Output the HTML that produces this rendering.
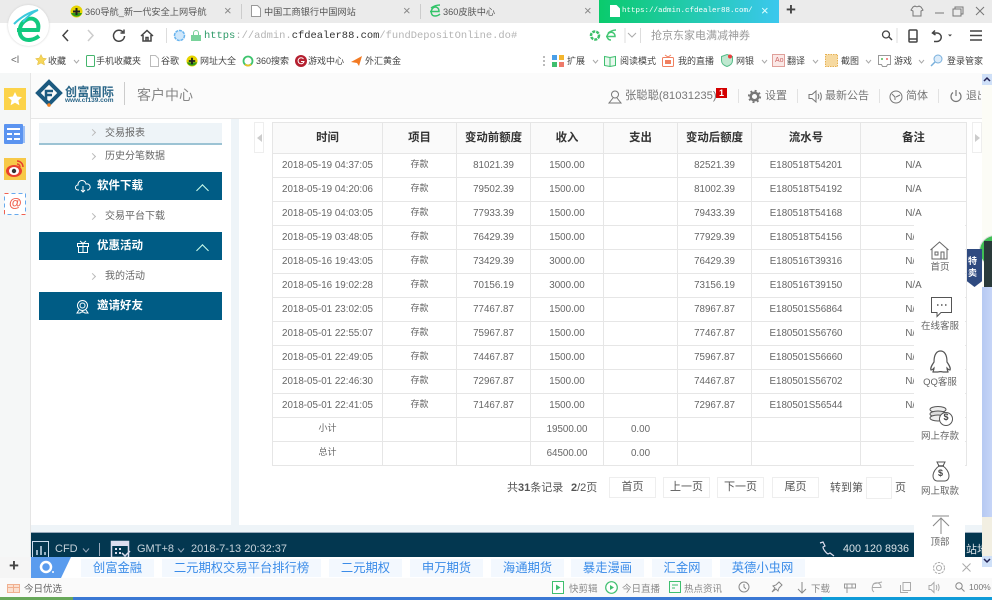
<!DOCTYPE html>
<html><head><meta charset="utf-8">
<style>
html,body{margin:0;padding:0}
body{width:992px;height:600px;overflow:hidden;position:relative;background:#fff;font-family:"Liberation Sans","Noto Sans CJK SC",sans-serif;font-size:10px;color:#555}
.a{position:absolute;white-space:nowrap}
svg{position:absolute;overflow:visible}
table{position:absolute;left:272px;top:122px;width:694px;border-collapse:collapse;table-layout:fixed}
tr{height:24px}
td,th{border:1px solid #e6e6e6;height:24px;box-sizing:border-box;line-height:12px;padding:2px 0 0;text-align:center;font-size:9.8px;color:#666;font-weight:normal;overflow:hidden;white-space:nowrap}
tr.h{height:30.5px}
th{height:30.5px;padding:0;background:#fafafa;color:#333;font-weight:bold;font-size:11.400px}
td.c{font-size:9px;padding:0 0 3px}
.nav{position:absolute;left:39px;width:183px;height:28px;background:#005c85;color:#fff;font-weight:bold;font-size:11.500px}
.nav span{position:absolute;left:58px;top:4.500px}
.sub{position:absolute;font-size:10px;color:#666;white-space:nowrap}
.chev{position:absolute;width:4px;height:4px;border-top:1px solid #bbb;border-right:1px solid #bbb;transform:rotate(45deg);left:90px}
.up{position:absolute;left:198px;width:8px;height:8px;border-top:1px solid #cfe;border-left:1px solid #cfe;transform:rotate(45deg)}
.btn{position:absolute;top:477px;height:21px;border:1px solid #eee;box-sizing:border-box;text-align:center;line-height:19px;font-size:11px;color:#555}
.lnk{position:absolute;top:559px;height:18px;background:#f3f8fe;color:#3b8ce8;font-size:12.300px;line-height:18px;text-align:center;white-space:nowrap}
.fl{position:absolute;left:915px;width:50px;text-align:center;font-size:9.500px;color:#666;white-space:nowrap}
.t1{font-size:9.200px;color:#555}
.t2{font-size:9px;color:#444}
</style></head><body>

<!-- tab bar -->
<div class="a" style="left:0;top:0;width:992px;height:23px;background:#ebebeb"></div>
<svg style="left:70px;top:5px" width="13" height="13" viewBox="0 0 13 13"><circle cx="6.500" cy="6.500" r="6" fill="#e6d400"/><path d="M1 8a6 6 0 0 0 11 0z" fill="#2f9a18"/><path d="M6.500 3v7M3 6.500h7" stroke="#222" stroke-width="2"/></svg>
<div class="a t1" style="left:85px;top:4px">360导航_新一代安全上网导航</div>
<div class="a" style="left:224px;top:3px;font-size:13px;color:#888">×</div>
<div class="a" style="left:241px;top:4px;width:1px;height:15px;background:#ccc"></div>
<svg style="left:251px;top:5px" width="10" height="12" viewBox="0 0 10 12"><path d="M.5.500h6l3 3v8h-9z" fill="#fff" stroke="#999"/></svg>
<div class="a t1" style="left:264px;top:4px">中国工商银行中国网站</div>
<div class="a" style="left:403px;top:3px;font-size:13px;color:#888">×</div>
<div class="a" style="left:420px;top:4px;width:1px;height:15px;background:#ccc"></div>
<svg style="left:429px;top:4px" width="12" height="14" viewBox="0 0 12 14"><path d="M1 7.500h9C10 3 6 2 4 4 1 7 2 12 6 12c2 0 4-1 5-2M2 4c3-2 6-3 9-3" fill="none" stroke="#35c46a" stroke-width="1.500"/></svg>
<div class="a t1" style="left:443px;top:4px">360皮肤中心</div>
<div class="a" style="left:584px;top:3px;font-size:13px;color:#888">×</div>
<div class="a" style="left:599px;top:0;width:180px;height:23px;background:linear-gradient(90deg,#0acb6c,#3bc8ee)"></div>
<svg style="left:610px;top:5px" width="10" height="12" viewBox="0 0 10 12"><path d="M0 0h6.500l3.500 3.500V12H0z" fill="#fff"/></svg>
<div class="a" style="left:622px;top:7px;font-family:'Liberation Mono',monospace;font-size:7.500px;color:#fff">https://admin.cfdealer88.com/</div>
<div class="a" style="left:761px;top:3px;font-size:13px;color:#dff">×</div>
<div class="a" style="left:786px;top:0;font-size:17px;color:#444;font-weight:bold">+</div>
<svg style="left:910px;top:5px" width="80" height="13" viewBox="0 0 80 13" fill="none" stroke="#777"><path d="M3 2l2-1c1 1 3 1 4 0l2 1 2 3-2 1v5H3V6L1 5z"/><path d="M25 8h9"/><path d="M43 4h8v7h-8zM45 4V2h8v7h-2"/><path d="M66 2l8 8M74 2l-8 8"/></svg>

<!-- address bar -->
<div class="a" style="left:0;top:23px;width:992px;height:27px;background:#fff;border-bottom:1px solid #e4e4e4"></div>
<svg style="left:60px;top:28px" width="100" height="16" viewBox="0 0 100 16" fill="none" stroke="#444" stroke-width="1.500"><path d="M8 2L3 7.500 8 13"/><path d="M28 2l5 5.500L28 13" stroke="#ccc"/><path d="M63 4a5.500 5.500 0 1 0 1.500 4M64 1.500V5h-3.500"/><path d="M81 8l6-5.500L93 8M83 7v6h8V7M86 13V9.500h2V13"/></svg>
<div class="a" style="left:166px;top:28px;width:1px;height:15px;background:#ddd"></div>
<svg style="left:173px;top:29px" width="13" height="13" viewBox="0 0 13 13"><circle cx="6.500" cy="6.500" r="5" fill="#cfe7fb" stroke="#66b3ee" stroke-width="1.500" stroke-dasharray="3 .8"/></svg>
<svg style="left:191px;top:30px" width="10" height="11" viewBox="0 0 10 11"><path d="M2.500 5V3a2.500 2.500 0 0 1 5 0v2" fill="none" stroke="#7ccf9a"/><rect y="5" width="10" height="6" fill="#79d39b"/></svg>
<div class="a" style="left:204px;top:30px;font-family:'Liberation Mono',monospace;font-size:10.450px;color:#b4b4b4"><span style="color:#2e9a68">https</span>://admin.<span style="color:#333">cfdealer88.com</span>/fundDepositOnline.do#</div>
<svg style="left:589px;top:28px" width="48" height="15" viewBox="0 0 48 15" fill="none"><circle cx="6" cy="7.500" r="4" stroke="#3cbf6a" stroke-width="2.500" stroke-dasharray="3 1"/><path d="M17 8.500h9C26 4 21 3 19 6c-2 3 0 6 3 6M19 5c3-2 5-3 8-3" stroke="#44c774" stroke-width="1.500"/><path d="M36 0v15" stroke="#ddd"/><path d="M39 5l4 4 4-4" stroke="#aaa"/></svg>
<div class="a" style="left:640px;top:28px;width:1px;height:15px;background:#ddd"></div>
<div class="a" style="left:651px;top:27px;font-size:11px;color:#999">抢京东家电满减神券</div>
<svg style="left:880px;top:28px" width="110" height="16" viewBox="0 0 110 16" fill="none" stroke="#444"><circle cx="6" cy="6.500" r="3.500" stroke-width="1.300"/><path d="M9 9l3 3" stroke-width="1.500"/><path d="M17 0v15" stroke="#ddd"/><rect x="29" y="2" width="8" height="12" rx="1" stroke-width="1.500"/><path d="M29 11h8" stroke-width="1.500"/><path d="M55 2.500L52.500 5l3 2M53 5h4a4 4 0 0 1 0 8.500h-3" stroke-width="1.500"/><path d="M68 6.500h4l-2 2z" fill="#444" stroke="none"/><path d="M90 3h12M90 7.500h12M90 12h12" stroke-width="1.600"/></svg>

<!-- logo circle -->
<div class="a" style="left:8px;top:5px;width:41px;height:41px;border-radius:50%;background:#fff;box-shadow:0 0 2px #ccc"></div>
<svg style="left:14px;top:9px" width="30" height="33" viewBox="0 0 30 33" fill="none"><path d="M3 21h21C26 12 19 7 12 11 5 15 3 26 10 30c4 2 10 1 15-3" stroke="#12c97f" stroke-width="4"/><path d="M0 15C7 8 16 3 24 1 17 4 12 9 9 13" stroke="#3ac9dc" stroke-width="2"/></svg>

<!-- bookmark bar -->
<div class="a" style="left:0;top:50px;width:992px;height:23px;background:#fff;border-bottom:1px solid #e2e2e2"></div>
<div class="a" style="left:11px;top:55px;font-size:10px;color:#666">&lt;l</div>
<svg style="left:35px;top:54px" width="12" height="12" viewBox="0 0 12 12"><path d="M6 .500l1.700 3.600 3.800.5-2.800 2.600.8 3.800L6 9l-3.500 1.900.8-3.800L.500 4.600l3.800-.5z" fill="#f6d65a" stroke="#e0b93a" stroke-width=".5"/></svg>
<div class="a t2" style="left:48px;top:54px">收藏</div>
<svg style="left:73px;top:60px" width="7" height="4" fill="none" stroke="#aaa"><path d="M1 0l2.500 3L6 0"/></svg>
<svg style="left:86px;top:55px" width="9" height="12" viewBox="0 0 9 12"><rect x=".5" y=".5" width="8" height="11" rx="1" fill="none" stroke="#45b56d"/></svg>
<div class="a t2" style="left:96px;top:54px">手机收藏夹</div>
<svg style="left:150px;top:55px" width="9" height="12" viewBox="0 0 9 12"><path d="M.5.500h5l3 3v8h-8z" fill="#fff" stroke="#bbb"/></svg>
<div class="a t2" style="left:161px;top:54px">谷歌</div>
<svg style="left:186px;top:55px" width="12" height="12" viewBox="0 0 13 13"><circle cx="6.500" cy="6.500" r="6" fill="#e6d400"/><path d="M1 8a6 6 0 0 0 11 0z" fill="#2f9a18"/><path d="M6.500 3v7M3 6.500h7" stroke="#222" stroke-width="2"/></svg>
<div class="a t2" style="left:200px;top:54px">网址大全</div>
<svg style="left:242px;top:55px" width="12" height="12" viewBox="0 0 12 12" fill="none"><circle cx="6" cy="6" r="4.500" stroke="#3ec46e" stroke-width="1.800"/><path d="M9 9.500a4.500 4.500 0 0 1-6 0" stroke="#f0c020" stroke-width="1.800"/></svg>
<div class="a t2" style="left:256px;top:54px">360搜索</div>
<svg style="left:295px;top:55px" width="12" height="12" viewBox="0 0 12 12"><circle cx="6" cy="6" r="6" fill="#b52030"/><path d="M8.500 4a3 3 0 1 0 .5 2.500H6" fill="none" stroke="#fff"/></svg>
<div class="a t2" style="left:308px;top:54px">游戏中心</div>
<svg style="left:351px;top:55px" width="12" height="12" viewBox="0 0 12 12"><path d="M0 7l11-6-3 10-2-3z" fill="#f27a23"/></svg>
<div class="a t2" style="left:365px;top:54px">外汇黄金</div>
<div class="a" style="left:543px;top:56px;width:2px;height:10px;border-left:2px dotted #bbb"></div>
<svg style="left:552px;top:55px" width="12" height="12" viewBox="0 0 12 12"><rect width="5" height="5" fill="#4a9fe8"/><rect x="7" y="0" width="5" height="5" fill="#f3b52e"/><rect y="7" width="5" height="5" fill="#3fbf6f"/><rect x="7" y="7" width="5" height="5" fill="#ee7a6a"/></svg>
<div class="a t2" style="left:567px;top:54px">扩展</div>
<svg style="left:592px;top:60px" width="7" height="4" fill="none" stroke="#aaa"><path d="M1 0l2.500 3L6 0"/></svg>
<svg style="left:604px;top:55px" width="12" height="12" viewBox="0 0 12 12"><path d="M.5 1.500l5.500 1 5.500-1v9L6 11.500l-5.500-1zM6 2.500v9" fill="#e8f8ee" stroke="#3fbf6f"/></svg>
<div class="a t2" style="left:620px;top:54px">阅读模式</div>
<svg style="left:662px;top:55px" width="12" height="12" viewBox="0 0 12 12"><rect x=".5" y="2.500" width="11" height="9" rx="1" fill="#fff" stroke="#f08060"/><rect x="3" y="5" width="6" height="4" fill="#f08060"/><path d="M3 0l3 2 3-2" fill="none" stroke="#f08060"/></svg>
<div class="a t2" style="left:678px;top:54px">我的直播</div>
<svg style="left:721px;top:54px" width="12" height="13" viewBox="0 0 12 13"><path d="M6 .5l5.500 2v4c0 3-2.500 5-5.500 6-3-1-5.500-3-5.500-6v-4z" fill="#bfe8d0" stroke="#55bb88"/><circle cx="9" cy="2.500" r="2" fill="#e84040"/></svg>
<div class="a t2" style="left:736px;top:54px">网银</div>
<svg style="left:761px;top:60px" width="7" height="4" fill="none" stroke="#aaa"><path d="M1 0l2.500 3L6 0"/></svg>
<svg style="left:772px;top:54px" width="13" height="13" viewBox="0 0 13 13"><rect x=".5" y=".5" width="12" height="12" fill="#fbe8e6" stroke="#e0a09a"/></svg>
<div class="a" style="left:775px;top:57px;font-size:7px;color:#c66">Ao</div>
<div class="a t2" style="left:787px;top:54px">翻译</div>
<svg style="left:812px;top:60px" width="7" height="4" fill="none" stroke="#aaa"><path d="M1 0l2.500 3L6 0"/></svg>
<svg style="left:825px;top:54px" width="13" height="13" viewBox="0 0 13 13"><rect x=".5" y=".5" width="12" height="12" fill="#f6d9a0" stroke="#e6b050" stroke-dasharray="1.500 1"/></svg>
<div class="a t2" style="left:841px;top:54px">截图</div>
<svg style="left:865px;top:60px" width="7" height="4" fill="none" stroke="#aaa"><path d="M1 0l2.500 3L6 0"/></svg>
<svg style="left:878px;top:55px" width="13" height="12" viewBox="0 0 13 12"><path d="M.5.500h12v9h-3l-1 2h-4l-1-2h-3z" fill="#fff" stroke="#999"/><circle cx="9" cy="4" r="1" fill="#e66"/><circle cx="4" cy="4" r="1" fill="#5b5"/></svg>
<div class="a t2" style="left:894px;top:54px">游戏</div>
<svg style="left:918px;top:60px" width="7" height="4" fill="none" stroke="#aaa"><path d="M1 0l2.500 3L6 0"/></svg>
<svg style="left:930px;top:54px" width="13" height="13" viewBox="0 0 13 13" fill="none"><circle cx="8" cy="5" r="4" fill="#dcecfa" stroke="#7ab0dc"/><path d="M5 8l-4 4" stroke="#7ab0dc" stroke-width="1.500"/></svg>
<div class="a t2" style="left:947px;top:54px">登录管家</div>

<!-- left browser sidebar -->
<div class="a" style="left:0;top:73px;width:30px;height:484px;background:#f5f7f7;border-right:1px solid #e5e5e5"></div>
<svg style="left:4px;top:88px" width="22" height="22" viewBox="0 0 22 22"><rect width="22" height="22" fill="#fcd34a"/><path d="M11 4l2.100 4.500 4.900.6-3.600 3.300 1 4.800L11 14.800l-4.400 2.400 1-4.800L4 9.100l4.900-.6z" fill="#fff"/></svg>
<svg style="left:4px;top:124px" width="21" height="20" viewBox="0 0 21 20"><rect width="19" height="20" rx="1" fill="#5b94f0"/><rect x="19" y="2" width="2" height="17" fill="#9cc0f6"/><path d="M3 5h13M3 10h5M10 10h6M3 15h5M10 15h6" stroke="#fff" stroke-width="2"/></svg>
<svg style="left:4px;top:158px" width="22" height="22" viewBox="0 0 22 22"><rect width="22" height="22" fill="#f7c948"/><ellipse cx="10" cy="13" rx="8" ry="6" fill="#e8412f"/><ellipse cx="10" cy="13" rx="5" ry="4" fill="#fff"/><circle cx="10" cy="13" r="2.200" fill="#333"/><path d="M13 3a6 6 0 0 1 6 6M13 6a3 3 0 0 1 3 3" fill="none" stroke="#e8412f" stroke-width="1.500"/></svg>
<svg style="left:4px;top:193px" width="22" height="22" viewBox="0 0 22 22"><rect x=".5" y=".5" width="21" height="21" fill="#fff" stroke="#66aaee" stroke-dasharray="4 3"/><path d="M.5.500h4M17.500 21.500h4M.5 17v4" stroke="#f06050" fill="none"/></svg>
<div class="a" style="left:9px;top:195px;font-size:13px;color:#f0604f;font-weight:bold">@</div>

<!-- page -->
<div class="a" style="left:31px;top:73px;width:951px;height:45px;background:#fbfbfb;border-bottom:1px solid #e6e6e6"></div>
<div class="a" style="left:31px;top:119px;width:951px;height:414px;background:#eef4f8"></div>
<div class="a" style="left:31px;top:119px;width:200px;height:406px;background:#fff"></div>
<div class="a" style="left:239px;top:119px;width:743px;height:406px;background:#fff"></div>

<!-- site logo -->
<svg style="left:36px;top:80px" width="28" height="27" viewBox="0 0 28 27"><path d="M13 2l11 11-11 11L2 13z" fill="none" stroke="#1c5a80" stroke-width="4"/><path d="M10 19v-8h7M11 15h5" fill="none" stroke="#1c5a80" stroke-width="2.500"/><circle cx="13" cy="25" r="1.800" fill="#f08020"/></svg>
<div class="a" style="left:65px;top:83px;font-size:12px;color:#2b6688;font-weight:bold;letter-spacing:.3px">创富国际</div>
<div class="a" style="left:65px;top:97px;font-size:6.500px;color:#2b6688;font-weight:bold">www.cf139.com</div>
<div class="a" style="left:124px;top:82px;width:1px;height:23px;background:#ccc"></div>
<div class="a" style="left:137px;top:85px;font-size:14px;color:#888">客户中心</div>

<!-- header right -->
<svg style="left:608px;top:90px" width="14" height="14" viewBox="0 0 14 14" fill="none" stroke="#777"><circle cx="7" cy="4.500" r="3.500"/><path d="M5 8L1 13h12L9 8"/></svg>
<div class="a" style="left:625px;top:87px;font-size:11.300px;color:#777">张聪聪(81031235)</div>
<div class="a" style="left:716px;top:88px;width:11px;height:10px;background:#d40000;color:#fff;font-size:9px;line-height:10px;text-align:center;font-weight:bold">1</div>
<div class="a" style="left:738px;top:89px;width:1px;height:14px;background:#e2e2e2"></div>
<svg style="left:748px;top:90px" width="13" height="13" viewBox="0 0 13 13"><circle cx="6.500" cy="6.500" r="3.800" fill="none" stroke="#777" stroke-width="2.500"/><circle cx="6.500" cy="6.500" r="5.700" fill="none" stroke="#777" stroke-width="1.800" stroke-dasharray="2 2.470"/></svg>
<div class="a" style="left:765px;top:87px;font-size:11px;color:#777">设置</div>
<div class="a" style="left:797px;top:89px;width:1px;height:14px;background:#e2e2e2"></div>
<svg style="left:808px;top:90px" width="14" height="13" viewBox="0 0 14 13" fill="none" stroke="#777"><path d="M1 4.500h3L8 1v11L4 8.500H1zM10 4c1 1 1 4 0 5M12 2.500c1.800 2 1.800 6 0 8"/></svg>
<div class="a" style="left:825px;top:87px;font-size:11px;color:#777">最新公告</div>
<div class="a" style="left:879px;top:89px;width:1px;height:14px;background:#e2e2e2"></div>
<svg style="left:889px;top:90px" width="14" height="14" viewBox="0 0 14 14" fill="none" stroke="#777"><circle cx="7" cy="7" r="6"/><path d="M3 4l3 3v3M7 7l4-2"/></svg>
<div class="a" style="left:906px;top:87px;font-size:11px;color:#777">简体</div>
<div class="a" style="left:938px;top:89px;width:1px;height:14px;background:#e2e2e2"></div>
<svg style="left:950px;top:90px" width="12" height="13" viewBox="0 0 12 13" fill="none" stroke="#777" stroke-width="1.200"><path d="M6 0v6M3 2.500a5 5 0 1 0 6 0"/></svg>
<div class="a" style="left:966px;top:87px;width:15px;overflow:hidden;font-size:11px;color:#777">退出</div>

<!-- left nav -->
<div class="a" style="left:39px;top:123px;width:183px;height:20px;background:#eef4f8;border-bottom:2px solid #9cc3d4"></div>
<div class="chev" style="top:130px"></div>
<div class="sub" style="left:105px;top:124px">交易报表</div>
<div class="chev" style="top:154px"></div>
<div class="sub" style="left:105px;top:147px">历史分笔数据</div>
<div class="nav" style="top:172px"><span>软件下载</span></div>
<svg style="left:75px;top:180px" width="16" height="13" viewBox="0 0 16 13" fill="none" stroke="#fff"><path d="M4 10H3A2.500 2.500 0 0 1 3 5a4 4 0 0 1 8-1 3 3 0 0 1 2 6h-1M8 6v6M6 10l2 2 2-2"/></svg>
<div class="up" style="top:186px"></div>
<div class="chev" style="top:214px"></div>
<div class="sub" style="left:105px;top:207px">交易平台下载</div>
<div class="nav" style="top:232px"><span>优惠活动</span></div>
<svg style="left:77px;top:240px" width="12" height="13" viewBox="0 0 12 13" fill="none" stroke="#fff"><path d="M.5 3.500h11v3H.5zM1.500 6.500v6h9v-6M6 3.500v9M3 1l3 2.500L9 1"/></svg>
<div class="up" style="top:246px"></div>
<div class="chev" style="top:274px"></div>
<div class="sub" style="left:105px;top:267px">我的活动</div>
<div class="nav" style="top:292px"><span>邀请好友</span></div>
<svg style="left:76px;top:300px" width="13" height="14" viewBox="0 0 13 14" fill="none" stroke="#fff"><circle cx="6.500" cy="5.500" r="5"/><circle cx="6.500" cy="5.500" r="2.500"/><path d="M3 10l-2 3h3l2.500-1.500L9 13h3l-2-3"/></svg>

<!-- collapse handles -->
<div class="a" style="left:254px;top:122px;width:10px;height:31px;background:#fff;border:1px solid #eee;box-sizing:border-box"></div>
<div class="a" style="left:257px;top:134px;border:4px solid transparent;border-right:5px solid #ccc;border-left:0"></div>
<div class="a" style="left:972px;top:122px;width:10px;height:31px;background:#fff;border:1px solid #eee;box-sizing:border-box"></div>
<div class="a" style="left:975px;top:134px;border:4px solid transparent;border-left:5px solid #ccc;border-right:0"></div>

<!-- table -->
<table>
<colgroup><col style="width:110px"><col style="width:74px"><col style="width:74px"><col style="width:73px"><col style="width:74px"><col style="width:74px"><col style="width:109px"><col style="width:106px"></colgroup>
<tr class="h"><th>时间</th><th>项目</th><th>变动前额度</th><th>收入</th><th>支出</th><th>变动后额度</th><th>流水号</th><th>备注</th></tr>
<tr><td>2018-05-19 04:37:05</td><td class="c">存款</td><td>81021.39</td><td>1500.00</td><td></td><td>82521.39</td><td>E180518T54201</td><td>N/A</td></tr>
<tr><td>2018-05-19 04:20:06</td><td class="c">存款</td><td>79502.39</td><td>1500.00</td><td></td><td>81002.39</td><td>E180518T54192</td><td>N/A</td></tr>
<tr><td>2018-05-19 04:03:05</td><td class="c">存款</td><td>77933.39</td><td>1500.00</td><td></td><td>79433.39</td><td>E180518T54168</td><td>N/A</td></tr>
<tr><td>2018-05-19 03:48:05</td><td class="c">存款</td><td>76429.39</td><td>1500.00</td><td></td><td>77929.39</td><td>E180518T54156</td><td>N/A</td></tr>
<tr><td>2018-05-16 19:43:05</td><td class="c">存款</td><td>73429.39</td><td>3000.00</td><td></td><td>76429.39</td><td>E180516T39316</td><td>N/A</td></tr>
<tr><td>2018-05-16 19:02:28</td><td class="c">存款</td><td>70156.19</td><td>3000.00</td><td></td><td>73156.19</td><td>E180516T39150</td><td>N/A</td></tr>
<tr><td>2018-05-01 23:02:05</td><td class="c">存款</td><td>77467.87</td><td>1500.00</td><td></td><td>78967.87</td><td>E180501S56864</td><td>N/A</td></tr>
<tr><td>2018-05-01 22:55:07</td><td class="c">存款</td><td>75967.87</td><td>1500.00</td><td></td><td>77467.87</td><td>E180501S56760</td><td>N/A</td></tr>
<tr><td>2018-05-01 22:49:05</td><td class="c">存款</td><td>74467.87</td><td>1500.00</td><td></td><td>75967.87</td><td>E180501S56660</td><td>N/A</td></tr>
<tr><td>2018-05-01 22:46:30</td><td class="c">存款</td><td>72967.87</td><td>1500.00</td><td></td><td>74467.87</td><td>E180501S56702</td><td>N/A</td></tr>
<tr><td>2018-05-01 22:41:05</td><td class="c">存款</td><td>71467.87</td><td>1500.00</td><td></td><td>72967.87</td><td>E180501S56544</td><td>N/A</td></tr>
<tr><td class="c">小计</td><td></td><td></td><td>19500.00</td><td>0.00</td><td></td><td></td><td></td></tr>
<tr><td class="c">总计</td><td></td><td></td><td>64500.00</td><td>0.00</td><td></td><td></td><td></td></tr>
</table>

<!-- pager -->
<div class="a" style="left:507px;top:479px;font-size:11px;color:#555">共<b>31</b>条记录</div>
<div class="a" style="left:571px;top:479px;font-size:11px;color:#555"><b>2</b>/2页</div>
<div class="btn" style="left:609px;width:47px">首页</div>
<div class="btn" style="left:663px;width:47px">上一页</div>
<div class="btn" style="left:717px;width:47px">下一页</div>
<div class="btn" style="left:772px;width:47px">尾页</div>
<div class="a" style="left:830px;top:479px;font-size:11px;color:#555">转到第</div>
<div class="a" style="left:866px;top:477px;width:26px;height:22px;border:1px solid #eee;box-sizing:border-box"></div>
<div class="a" style="left:895px;top:479px;font-size:11px;color:#555">页</div>

<!-- dark footer -->
<div class="a" style="left:31px;top:532px;width:951px;height:25px;background:#033750;border-top:1px solid #9ab"></div>
<svg style="left:32px;top:541px" width="18" height="16" viewBox="0 0 18 16" fill="none" stroke="#cde"><path d="M.5 16V.5h16V16"/><path d="M5 14V9M9 14V5M13 14v-3" stroke-width="1.500"/></svg>
<div class="a" style="left:55px;top:543px;font-size:11px;color:#c6d2da">CFD</div>
<svg style="left:82px;top:548px" width="8" height="5" fill="none" stroke="#9ab"><path d="M1 .500L4 4l3-3.500"/></svg>
<div class="a" style="left:99px;top:543px;width:1px;height:13px;background:#9ab"></div>
<svg style="left:111px;top:541px" width="20" height="16" viewBox="0 0 20 16"><rect x=".5" y=".5" width="17" height="16" fill="none" stroke="#dde" stroke-width="1.500"/><rect x="1" y="1" width="16" height="4" fill="#dde"/><path d="M4 8h2M8 8h2M4 12h2M8 12h2" stroke="#dde" stroke-width="2"/><path d="M11 12l3 3 5-5" stroke="#dde" fill="none" stroke-width="1.500"/></svg>
<div class="a" style="left:137px;top:543px;font-size:11px;color:#c6d2da">GMT+8</div>
<svg style="left:177px;top:548px" width="8" height="5" fill="none" stroke="#9ab"><path d="M1 .500L4 4l3-3.500"/></svg>
<div class="a" style="left:191px;top:543px;font-size:11px;color:#c6d2da">2018-7-13 20:32:37</div>
<svg style="left:818px;top:541px" width="18" height="16" viewBox="0 0 18 16" fill="none" stroke="#dde" stroke-width="1.200"><path d="M2 2l3-1 2 4-2 1c0 2 3 6 5 7l2-1 4 3"/></svg>
<div class="a" style="left:843px;top:543px;font-size:10.800px;color:#dbe3e8">400 120 8936</div>
<div class="a" style="left:966px;top:541px;width:16px;overflow:hidden;font-size:11px;color:#dbe3e8">站地图</div>

<!-- floating panel -->
<div class="a" style="left:914px;top:225px;width:50.500px;height:52px;background:#fff"></div>
<div class="a" style="left:914px;top:295px;width:50.500px;height:96.500px;background:#fff"></div>
<div class="a" style="left:914px;top:392.500px;width:50.500px;height:165px;background:#fff"></div>
<svg style="left:930px;top:241px" width="19" height="19" viewBox="0 0 19 19" fill="none" stroke="#666"><path d="M.5 9L9.500 1l9 8M2 7.500V18h15V7.500M5 11h3v3H5zM11 18v-7h3v7"/></svg>
<div class="fl" style="top:259px">首页</div>
<svg style="left:931px;top:297px" width="21" height="21" viewBox="0 0 21 21" fill="none" stroke="#555"><path d="M.5.500h20v15H10l-4 4v-4H.5z"/><path d="M6 8h1.500M10 8h1.500M14 8h1.500" stroke-width="1.500"/></svg>
<div class="fl" style="top:318px">在线客服</div>
<svg style="left:929px;top:350px" width="23" height="24" viewBox="0 0 23 24" fill="none" stroke="#555" stroke-width="1.200"><path d="M5 12C5 4 8 1 11.500 1S18 4 18 12c2 3 4 6 3 8-2 0-2-1-3-2 0 2 1 3 1 4H14c-1-.5-4-.5-5 0H4c0-1 1-2 1-4-1 1-1 2-3 2-1-2 1-5 3-8z"/></svg>
<div class="fl" style="top:374px">QQ客服</div>
<svg style="left:929px;top:406px" width="26" height="21" viewBox="0 0 26 21" fill="none" stroke="#555"><ellipse cx="9" cy="3.500" rx="8" ry="3" fill="#eee"/><ellipse cx="9" cy="8" rx="8" ry="3" fill="#ddd"/><ellipse cx="9" cy="12" rx="8" ry="3" fill="#eee"/><circle cx="17" cy="13" r="6.500" fill="#fff"/></svg>
<div class="a" style="left:943.500px;top:412px;font-size:9px;color:#444;font-weight:bold">$</div>
<div class="fl" style="top:428px">网上存款</div>
<svg style="left:932px;top:461px" width="18" height="21" viewBox="0 0 18 21" fill="none" stroke="#555"><path d="M5 1h8l-2 4c3 2 6 6 6 10 0 3-2 5-4 5H5c-2 0-4-2-4-5 0-4 3-8 6-10z"/><path d="M6 5h6" stroke-width="1.500"/></svg>
<div class="a" style="left:938px;top:468px;font-size:9px;color:#444;font-weight:bold">$</div>
<div class="fl" style="top:483px">网上取款</div>
<svg style="left:931px;top:515px" width="20" height="20" viewBox="0 0 20 20" fill="none" stroke="#888"><path d="M1 1h17M10 3v16M2 11l8-8 8 8"/></svg>
<div class="fl" style="top:534px">顶部</div>

<!-- scrollbar -->
<div class="a" style="left:982px;top:73px;width:10px;height:485px;background:#fcfcf6"></div>
<div class="a" style="left:982px;top:287px;width:10px;height:230px;background:linear-gradient(90deg,#b6c9f2,#c6d5f7)"></div>
<div class="a" style="left:982px;top:517px;width:10px;height:40px;background:#f2efe2"></div>
<div class="a" style="left:982px;top:74px;width:10px;height:11px;background:#cfe0f8"></div>
<svg style="left:983px;top:76px" width="8" height="6" fill="none" stroke="#225" stroke-width="1.500"><path d="M1 5l3-3 3 3"/></svg>
<div class="a" style="left:982px;top:556px;width:10px;height:11px;background:#cfe0f8"></div>
<svg style="left:983px;top:558px" width="8" height="6" fill="none" stroke="#225" stroke-width="1.500"><path d="M1 1l3 3 3-3"/></svg>

<!-- widget at right -->
<div class="a" style="left:979px;top:235px;width:30px;height:30px;border-radius:50%;background:#3fbf55;border:1px solid #ddd"></div>
<div class="a" style="left:967px;top:249px;width:15px;height:38px;background:#2f4a80;clip-path:polygon(0 0,100% 0,100% 85%,50% 100%,0 85%)"></div>
<div class="a" style="left:968px;top:255px;font-size:9px;line-height:12px;color:#fff;font-weight:bold;white-space:normal;width:12px">特卖</div>
<div class="a" style="left:984px;top:241px;width:8px;height:46px;background:#2a3a3a"></div>

<!-- favorites bar -->
<div class="a" style="left:0;top:557px;width:982px;height:21px;background:#fff;border-bottom:1px solid #ddd"></div>
<div class="a" style="left:0;top:557px;width:31px;height:21px;background:#f5f5f5"></div>
<div class="a" style="left:9px;top:556px;font-size:17px;font-weight:bold;color:#444">+</div>
<div class="a" style="left:31px;top:557px;width:40px;height:21px;background:#5a9cee;clip-path:polygon(0 0,100% 0,75% 100%,0 100%)"></div>
<svg style="left:39px;top:560px" width="16" height="14" viewBox="0 0 16 14" fill="none"><circle cx="7" cy="7" r="5" stroke="#fff" stroke-width="2.500"/><circle cx="14" cy="12" r="1" fill="#fff"/></svg>
<div class="lnk" style="left:81px;width:73px">创富金融</div>
<div class="lnk" style="left:162px;width:159px">二元期权交易平台排行榜</div>
<div class="lnk" style="left:329px;width:73px">二元期权</div>
<div class="lnk" style="left:410px;width:73px">申万期货</div>
<div class="lnk" style="left:491px;width:73px">海通期货</div>
<div class="lnk" style="left:571px;width:73px">暴走漫画</div>
<div class="lnk" style="left:652px;width:60px">汇金网</div>
<div class="lnk" style="left:720px;width:85px">英德小虫网</div>
<svg style="left:932px;top:561px" width="14" height="14" viewBox="0 0 14 14" fill="none" stroke="#aaa"><circle cx="7" cy="7" r="2.500"/><circle cx="7" cy="7" r="5.500" stroke-dasharray="2.500 1"/></svg>
<svg style="left:962px;top:563px" width="9" height="9" fill="none" stroke="#aaa"><path d="M.5.500l8 8M8.500.500l-8 8"/></svg>

<!-- status bar -->
<div class="a" style="left:0;top:578px;width:992px;height:19px;background:#fafafa"></div>
<svg style="left:7px;top:582px" width="13" height="11" viewBox="0 0 13 11" fill="#fbe0d0" stroke="#f0b090"><path d="M.5 2.500h12v8H.5zM.5 5.500h12M6.500 2.500v8"/></svg>
<div class="a" style="left:24px;top:581px;font-size:9.500px;color:#666">今日优选</div>
<svg style="left:552px;top:581px" width="12" height="13" viewBox="0 0 12 13"><rect x=".5" y=".5" width="11" height="12" fill="#fff" stroke="#3fbf6f"/><path d="M4 3.500l4.500 3L4 9.500z" fill="#3fbf6f"/></svg>
<div class="a" style="left:569px;top:581px;font-size:9.500px;color:#888">快剪辑</div>
<svg style="left:605px;top:581px" width="13" height="13" viewBox="0 0 13 13"><circle cx="6.500" cy="6.500" r="5.800" fill="#fff" stroke="#3fbf6f" stroke-width="1.200"/><path d="M5 4l4 2.500L5 9z" fill="#3fbf6f"/></svg>
<div class="a" style="left:622px;top:581px;font-size:9.500px;color:#888">今日直播</div>
<svg style="left:669px;top:581px" width="12" height="13" viewBox="0 0 12 13" fill="none" stroke="#3fbf6f"><rect x=".5" y=".5" width="11" height="11"/><path d="M3 4h6M3 7h3"/></svg>
<div class="a" style="left:684px;top:581px;font-size:9.500px;color:#888">热点资讯</div>
<svg style="left:738px;top:581px" width="12" height="12" viewBox="0 0 12 12" fill="none" stroke="#888"><circle cx="6" cy="6" r="5"/><path d="M6 3v3l2 2"/></svg>
<svg style="left:771px;top:581px" width="12" height="12" viewBox="0 0 12 12" fill="none" stroke="#888"><path d="M1 11l3-4-2-2 3-1 3-3 3 3-3 3-1 3-2-2z"/></svg>
<svg style="left:797px;top:581px" width="10" height="13" viewBox="0 0 10 13" fill="none" stroke="#888"><path d="M5 1v11M1 8l4 4 4-4"/></svg>
<div class="a" style="left:811px;top:581px;font-size:9.500px;color:#888">下载</div>
<svg style="left:844px;top:583px" width="12" height="10" viewBox="0 0 12 10" fill="none" stroke="#999"><path d="M.5 1h11v4H.5zM3 1v9M8 1v4"/></svg>
<svg style="left:871px;top:581px" width="12" height="12" viewBox="0 0 12 12" fill="none" stroke="#aaa"><path d="M1 6.500h9C10 3 7 1 4 2 1 3.500 0 9 3 11M2 3l9-2"/></svg>
<svg style="left:900px;top:582px" width="11" height="11" viewBox="0 0 11 11" fill="none" stroke="#aaa"><path d="M3 .5h7.500v8H3zM.5 3v7.500H8"/></svg>
<svg style="left:928px;top:582px" width="13" height="11" viewBox="0 0 13 11" fill="none" stroke="#aaa"><path d="M1 3.500h2L6 .5v10L3 7.500H1zM8 3c1 1 1 4 0 5M10 2c1.500 2 1.500 5 0 7"/></svg>
<svg style="left:955px;top:582px" width="10" height="10" viewBox="0 0 10 10" fill="none" stroke="#888"><circle cx="4" cy="4" r="3.200"/><path d="M6.500 6.500L9.500 9.500"/></svg>
<div class="a" style="left:969px;top:582px;font-size:8.500px;color:#777">100%</div>

<!-- taskbar -->
<div class="a" style="left:0;top:597px;width:992px;height:3px;background:#3a78d4"></div>
<div class="a" style="left:0;top:597px;width:73px;height:3px;background:#68a85a"></div>
<div class="a" style="left:822px;top:597px;width:170px;height:3px;background:#0f9bd8"></div>
</body></html>
